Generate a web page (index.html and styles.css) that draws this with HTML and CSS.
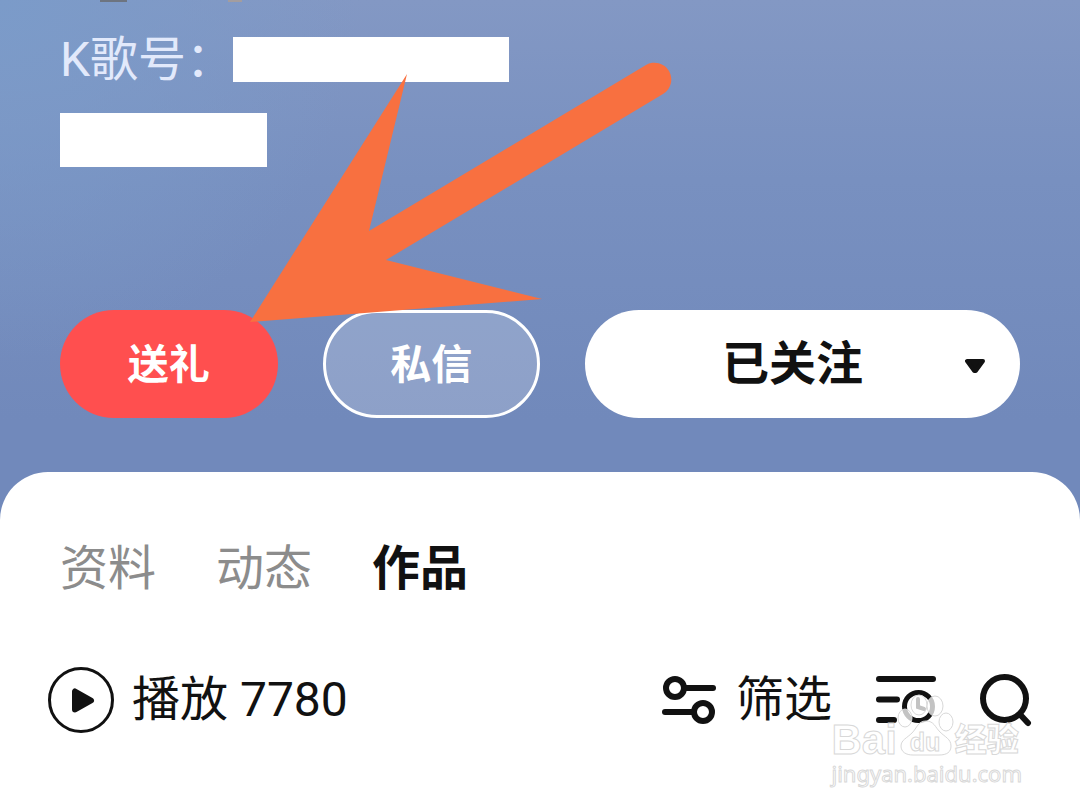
FILE: index.html
```html
<!DOCTYPE html>
<html lang="zh-CN">
<head>
  <meta charset="UTF-8">
  <title>K歌号</title>
  <meta name="viewport" content="width=device-width, initial-scale=1">
  <link rel="stylesheet" href="styles.css">
</head>
<body>
  <header class="profile">
    <div class="badges">
      <span class="badge badge-dark"></span>
      <span class="badge badge-gold"></span>
    </div>
    <div class="id-row">
      <span class="id-label">K歌号：</span>
      <span class="mask mask-id"></span>
    </div>
    <div class="mask mask-info"></div>

    <div class="actions">
      <button class="btn btn-gift">送礼</button>
      <button class="btn btn-message">私信</button>
      <div class="follow">
        <select class="btn btn-follow" aria-label="已关注">
          <option>已关注</option>
        </select>
        <svg class="caret" viewBox="0 0 20 14" aria-hidden="true">
          <path d="M2 2h16L10.700 12h-1.400z" fill="#111" stroke="#111" stroke-width="4" stroke-linejoin="round"/>
        </svg>
      </div>
    </div>
  </header>

  <main class="sheet">
    <nav class="tabs">
      <a class="tab" href="#">资料</a>
      <a class="tab" href="#">动态</a>
      <a class="tab active" href="#">作品</a>
    </nav>

    <div class="toolbar">
      <button class="tool play">
        <svg class="icon-play" viewBox="0 0 66 66" aria-hidden="true">
          <circle cx="33" cy="33" r="31.500" fill="none" stroke="#111" stroke-width="3"/>
          <path d="M27 24.500v18L43 33.500z" fill="#111" stroke="#111" stroke-width="6" stroke-linejoin="round"/>
        </svg>
        <span>播放 7780</span>
      </button>
      <div class="tools">
        <button class="tool filter">
          <svg class="icon-filter" viewBox="0 0 54 54" fill="none" stroke="#111" stroke-width="6" stroke-linecap="round" aria-hidden="true">
            <circle cx="13" cy="15" r="9"/>
            <path d="M23 15h28"/>
            <circle cx="41" cy="39" r="9"/>
            <path d="M3 39h28"/>
          </svg>
          <span>筛选</span>
        </button>
        <button class="tool" aria-label="播放">
          <svg class="icon-list" viewBox="0 0 60 54" fill="none" stroke="#111" stroke-width="6" stroke-linecap="round" aria-hidden="true">
            <path d="M3 6h54M3 26.500h18M3 47h15"/>
            <circle cx="42.500" cy="33.500" r="14" stroke-width="5"/>
            <path d="M42 26v8l6 2" stroke-width="4"/>
          </svg>
        </button>
        <button class="tool" aria-label="筛选">
          <svg class="icon-search" viewBox="0 0 52 54" fill="none" stroke="#111" stroke-width="6" stroke-linecap="round" aria-hidden="true">
            <circle cx="24.500" cy="25.500" r="21.500"/>
            <path d="M41 42.500l7 7.500"/>
          </svg>
        </button>
      </div>
    </div>
  </main>

  <!-- pointer to the gift button -->
  <svg class="arrow" viewBox="0 0 440 280" aria-hidden="true">
    <path d="M10 272L167 24 129 181 406 15A16.500 16.500 0 0 1 423 44L146 210 302 249z" fill="#f87040"/>
  </svg>

  <div class="watermark">
    <div class="brand">
      <span class="bai">Bai</span>
      <span class="paw">
        <svg class="paw-shape" viewBox="0 0 58 64" fill="#fff" fill-opacity="0.75" stroke="#d8d8d8" aria-hidden="true">
          <ellipse cx="8" cy="24" rx="7" ry="9"/>
          <ellipse cx="22" cy="11" rx="8" ry="10"/>
          <ellipse cx="38" cy="12" rx="8" ry="10"/>
          <ellipse cx="49" cy="28" rx="7" ry="9"/>
          <path d="M29 27c-8 0-9 7-14 12S4 46 4 52c0 6 5 9 12 9h26c8 0 12-3 12-9 0-7-6-9-11-14s-6-11-14-11z"/>
        </svg>
        <span class="du">du</span>
      </span>
      <span class="jingyan">经验</span>
    </div>
    <div class="site">jingyan.baidu.com</div>
  </div>
</body>
</html>
```

FILE: styles.css
```css
:root {
  --ink: #111;
  --muted: #8c8c8c;
  --red: #ff4f4f;
  --line: #d8d8d8;
}

* {
  box-sizing: border-box;
}

body {
  margin: 0;
  min-height: 100vh;
  position: relative;
  display: flex;
  flex-direction: column;
  font-family: Roboto, "Noto Sans CJK SC", sans-serif;
  font-size: 48px;
  color: var(--ink);
  background: radial-gradient(circle at 0 0, #7b9bc9, rgba(123, 155, 201, 0) 360px),
    linear-gradient(180deg, #8398c4 0, #7890c0 180px, #7189bb 420px);
}

button,
select {
  font: inherit;
  color: inherit;
  border: none;
  background: none;
  padding: 0;
  cursor: pointer;
}

svg {
  display: block;
  flex: none;
}

.profile {
  padding: 0 60px 54px;
}

.badges {
  display: flex;
  gap: 101px;
  height: 2px;
  padding-left: 40px;
  margin-bottom: 35px;
}

.badge {
  width: 27px;
  background: #6d7480;
}

.badge-gold {
  width: 14px;
  background: #a39d9f;
}

.id-row {
  display: flex;
  align-items: center;
  height: 45px;
}

.id-label {
  width: 173px;
  line-height: 48px;
  white-space: nowrap;
  color: #e2e9fb;
}

.mask {
  background: #fff;
}

.mask-id {
  width: 276px;
  height: 45px;
}

.mask-info {
  width: 207px;
  height: 54px;
  margin-top: 31px;
}

.actions {
  display: grid;
  grid-template-columns: 1fr 1fr 2fr;
  gap: 45px;
  margin-top: 143px;
}

.btn {
  height: 108px;
  padding-top: 2px;
  border-radius: 54px;
  font-size: 41px;
  font-weight: 700;
  line-height: 48px;
  color: #fff;
}

.btn-gift {
  background: var(--red);
}

.btn-message {
  border: 3px solid #fff;
  background: rgba(255, 255, 255, 0.2);
}

.follow {
  position: relative;
}

.btn-follow {
  display: block;
  appearance: none;
  width: 100%;
  padding: 0 20px 0 0;
  background: #fff;
  color: var(--ink);
  font-size: 47px;
  text-align: center;
  text-align-last: center;
}

.caret {
  position: absolute;
  top: 49px;
  right: 35px;
  width: 20px;
  height: 14px;
  pointer-events: none;
}

.sheet {
  flex: 1;
  padding: 65px 48px 48px;
  border-radius: 48px 48px 0 0;
  background: #fff;
}

.tabs {
  display: flex;
  gap: 60px;
  padding-left: 12px;
  line-height: 64px;
}

.tab {
  color: var(--muted);
  text-decoration: none;
}

.tab.active {
  color: var(--ink);
  font-weight: 700;
}

.toolbar {
  display: flex;
  align-items: center;
  justify-content: space-between;
  margin-top: 66px;
}

.tools {
  display: flex;
  align-items: center;
  gap: 44px;
}

.tool {
  display: flex;
  align-items: center;
  gap: 18px;
  line-height: 66px;
}

.filter {
  gap: 20px;
}

.icon-play {
  width: 66px;
  height: 66px;
}

.icon-filter {
  width: 54px;
  height: 54px;
}

.icon-list {
  width: 60px;
  height: 54px;
}

.icon-search {
  width: 52px;
  height: 54px;
}

.arrow {
  position: absolute;
  top: 50px;
  left: 240px;
  width: 440px;
  height: 280px;
  pointer-events: none;
}

.watermark {
  position: absolute;
  right: 58px;
  bottom: 22px;
  color: rgba(255, 255, 255, 0.75);
  -webkit-text-stroke: 1px var(--line);
  pointer-events: none;
}

.brand {
  display: flex;
  align-items: flex-end;
}

.bai {
  font: 700 42px/36px "Liberation Sans", sans-serif;
}

.paw {
  position: relative;
}

.paw-shape {
  width: 58px;
  height: 64px;
}

.du {
  position: absolute;
  left: 13px;
  bottom: 3px;
  font: 700 25px/25px "Liberation Sans", sans-serif;
}

.jingyan {
  font-size: 32px;
  font-weight: 900;
  line-height: 36px;
}

.site {
  font: 22px/30px "Noto Sans", sans-serif;
}
```
